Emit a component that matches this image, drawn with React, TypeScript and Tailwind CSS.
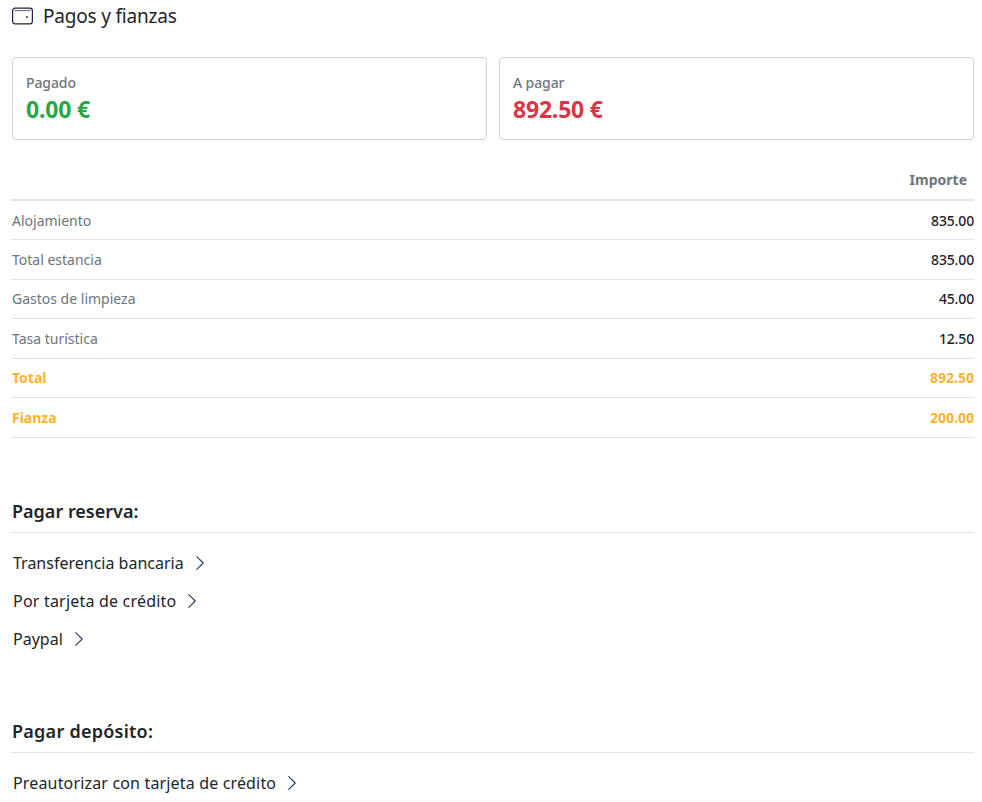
import React from 'react';

const rows = [
  { label: 'Alojamiento', amount: '835.00' },
  { label: 'Total estancia', amount: '835.00' },
  { label: 'Gastos de limpieza', amount: '45.00' },
  { label: 'Tasa turística', amount: '12.50' },
];

const Chevron: React.FC = () => (
  <svg width="16" height="16" viewBox="0 0 16 16" fill="none" className="ml-2 text-[#1f3f66]">
    <path d="M4.8 1.6 11.2 8l-6.4 6.4" stroke="currentColor" strokeWidth="1.1" strokeLinecap="round" strokeLinejoin="round" />
  </svg>
);

const PayLink: React.FC<{ label: string; className: string }> = ({ label, className }) => (
  <a className={`flex h-[38px] items-center pl-px text-[16px] text-[#212529] ${className}`}>
    {label}
    <Chevron />
  </a>
);

const App: React.FC = () => {
  return (
    <div className="h-[802px] w-[982px] overflow-hidden border-b-2 border-[#f8f9fa] bg-white pl-3 pr-2 font-['Noto_Sans',sans-serif]">
      <div className="flex h-[33px] items-center text-[19px] tracking-[-0.2px] text-[#212529]">
        <svg width="22" height="20" viewBox="0 0 22 20" fill="none" className="mr-[9px] text-[#1c2540]">
          <rect x="0.6" y="1.2" width="19.8" height="15.6" rx="2.5" stroke="currentColor" strokeWidth="1.2" />
          <path d="M2.5 3.6h16" stroke="currentColor" strokeWidth="1" opacity="0.7" />
          <circle cx="15" cy="10" r="0.9" fill="currentColor" />
        </svg>
        Pagos y fianzas
      </div>

      <div className="mt-6 grid grid-cols-2 gap-3">
        <div className="h-[83px] rounded border border-[#d0d2d7] px-[13px] pt-[14px]">
          <div className="text-[14px] leading-[21px] font-medium tracking-[-0.1px] text-[#6c757d]">Pagado</div>
          <div className="text-[23px] leading-[33px] font-bold tracking-[-0.2px] text-[#28a745]">0.00 €</div>
        </div>
        <div className="h-[83px] rounded border border-[#d0d2d7] px-[13px] pt-[14px]">
          <div className="text-[14px] leading-[21px] font-medium tracking-[-0.1px] text-[#6c757d]">A pagar</div>
          <div className="text-[23px] leading-[33px] font-bold tracking-[-0.2px] text-[#dc3545]">892.50 €</div>
        </div>
      </div>

      <table className="mt-5 w-full border-collapse text-[14px]">
        <thead>
          <tr className="h-[40px] border-b-2 border-[#dee2e6]">
            <th className="font-normal" />
            <th className="pr-[7px] text-right font-bold text-[#6c757d]">Importe</th>
          </tr>
        </thead>
        <tbody>
          {rows.map((row) => (
            <tr key={row.label} className="h-[39.5px] border-b border-[#dee2e6]">
              <td className="text-[#6c757d]">{row.label}</td>
              <td className="text-right font-medium tracking-[-0.15px] text-[#212529]">{row.amount}</td>
            </tr>
          ))}
          <tr className="h-[39.5px] border-b border-[#dee2e6] font-bold text-[#ffb22e]">
            <td>Total</td>
            <td className="text-right">892.50</td>
          </tr>
          <tr className="h-[39.5px] border-b border-[#dee2e6] font-bold text-[#ffb22e]">
            <td>Fianza</td>
            <td className="text-right">200.00</td>
          </tr>
        </tbody>
      </table>

      <h5 className="mt-[60px] border-b border-[#dee2e6] pb-[7px] text-[18px] leading-[27px] font-semibold text-[#212529]">
        Pagar reserva:
      </h5>
      <div className="mt-[11px]">
        <PayLink label="Transferencia bancaria" className="tracking-[0px]" />
        <PayLink label="Por tarjeta de crédito" className="tracking-[0.2px]" />
        <PayLink label="Paypal" className="tracking-[0px]" />
      </div>

      <h5 className="mt-[60px] border-b border-[#dee2e6] pb-[7px] text-[18px] leading-[27px] font-semibold tracking-[0.25px] text-[#212529]">
        Pagar depósito:
      </h5>
      <div className="mt-[11px]">
        <PayLink label="Preautorizar con tarjeta de crédito" className="tracking-[0.16px]" />
      </div>
    </div>
  );
};

export default App;
